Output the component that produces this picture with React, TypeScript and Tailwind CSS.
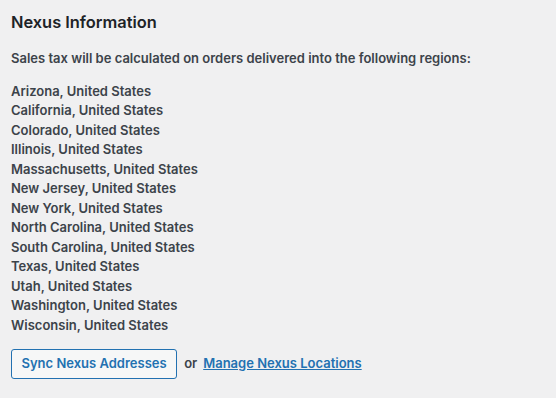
const regions = [
  "Arizona",
  "California",
  "Colorado",
  "Illinois",
  "Massachusetts",
  "New Jersey",
  "New York",
  "North Carolina",
  "South Carolina",
  "Texas",
  "Utah",
  "Washington",
  "Wisconsin",
]

export default function App() {
  return (
    <div className="min-h-[398px] w-full bg-[#f0f0f1] px-[11px] pt-[11px] font-['Inter',sans-serif] text-[#3c434a]">
      <h2 className="text-[16.4px] font-semibold leading-[22px] text-[#1d2327]">Nexus Information</h2>

      <p className="mt-[16px] text-[13px] font-semibold leading-[19.5px]">
        Sales tax will be calculated on orders delivered into the following regions:
      </p>

      <ul className="mt-[13px] text-[13px] font-semibold leading-[19.5px]">
        {regions.map((r) => (
          <li key={r}>{r}, United States</li>
        ))}
      </ul>

      <div className="mt-[14px] flex items-center">
        <button className="h-[30px] rounded-[3px] border border-[#2271b1] bg-[#f6f7f7] px-[9.5px] text-[13px] font-semibold text-[#2271b1]">
          Sync Nexus Addresses
        </button>
        <span className="ml-[7px] text-[13px] font-semibold">or</span>
        <a href="#" className="ml-[6px] text-[13px] font-semibold text-[#2271b1] underline">
          Manage Nexus Locations
        </a>
      </div>
    </div>
  )
}
